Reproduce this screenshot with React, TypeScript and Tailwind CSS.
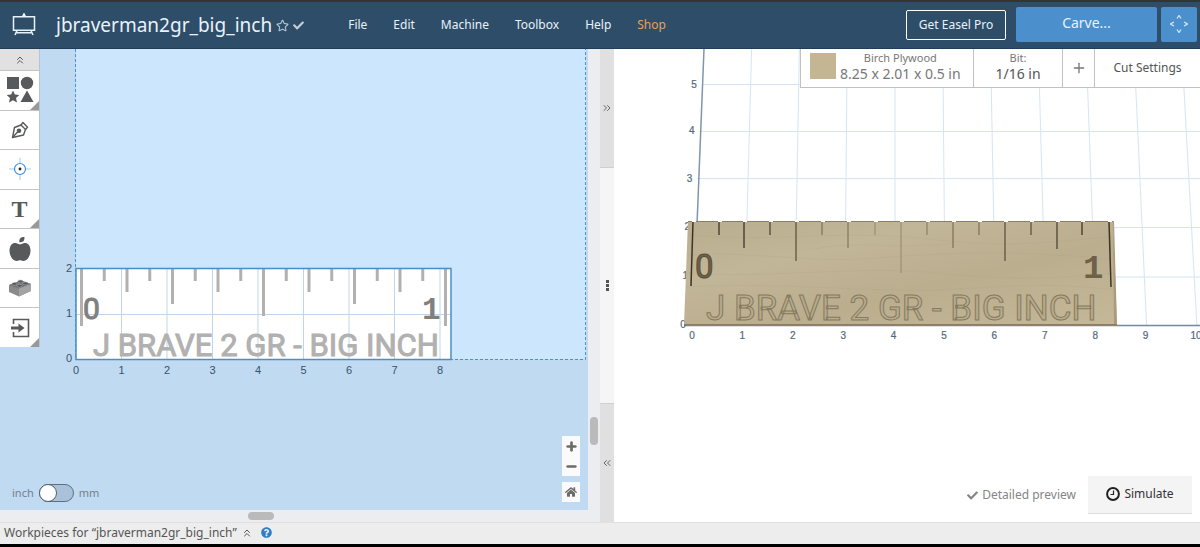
import { ReactNode, useState } from "react";
import { FaAppleAlt, FaCheck, FaHome, FaQuestionCircle, FaRegStar } from "react-icons/fa";
import {
  ChevronsLeft,
  ChevronsRight,
  ChevronsUp,
  Minus,
  Plus,
} from "lucide-react";

const PROJECT = "jbraverman2gr_big_inch";
const ENGRAVING = "J BRAVE 2 GR - BIG INCH";

const menu = ["File", "Edit", "Machine", "Toolbox", "Help"];

// depth of each ruler mark, in pixels of the 2D canvas
const marks = [57, 12, 23, 12, 35, 12, 23, 12, 47, 12, 23, 12, 35, 12, 23, 12, 57];

// x and lower end of each mark on the 3D board
const carvedMarks = [
  [79, 237, "#3d3524"],
  [105, 186, "#4f4632"],
  [130, 199, "#4f4632"],
  [156, 186, "#5d543e"],
  [182, 212, "#6b6149"],
  [208, 186, "#8a7e62"],
  [234, 199, "#8f8366"],
  [261, 186, "#a3967a"],
  [287, 224, "#a3967a"],
  [313, 186, "#968a6e"],
  [339, 199, "#8a7e62"],
  [365, 186, "#8a7e62"],
  [391, 212, "#6b6149"],
  [417, 186, "#6b6149"],
  [443, 200, "#5d543e"],
  [468, 186, "#4f4632"],
  [495, 238, "#3d3524"],
] as const;

const Logo = () => (
  <svg width="24" height="24" viewBox="0 0 24 24" fill="none" stroke="#e6f2fc" strokeWidth="1.500">
    <path d="M1.500 3.800h21v13.500h-21z" />
    <path d="M10.500 3.800L12 .8l1.500 3" fill="#e6f2fc" />
    <path d="M5 17.500L3 22M19 17.500l2 4.500M4.500 19.800h15" />
  </svg>
);

const ShapesIcon = () => (
  <svg width="28" height="28" viewBox="0 0 28 28" fill="#58595b">
    <path d="M1 1h12v12H1z" />
    <circle cx="21" cy="7" r="6.200" />
    <path d="M7 14.500l1.900 4.100 4.400.5-3.300 3 1 4.400L7 24.300l-4 2.200 1-4.400-3.300-3 4.400-.5z" />
    <path d="M21 14.500l6.500 11.500h-13z" />
  </svg>
);

const PenIcon = () => (
  <svg width="18" height="18" viewBox="0 0 18 18" fill="none" stroke="#58595b" strokeWidth="1.400" strokeLinejoin="round">
    <path d="M1.500 16.500L3.500 6.500 10 4l4.500 4.500L12.500 14z" />
    <path d="M10 4l2-2.500 4.500 4.700-2 2.300M1.500 16.500L7.500 10" />
    <circle cx="8" cy="9.800" r="1.600" fill="#58595b" />
  </svg>
);

const TargetIcon = () => (
  <svg width="22" height="22" viewBox="0 0 22 22" fill="none">
    <path d="M11 0v5M11 17v5M0 11h5M17 11h5" stroke="#9ccbf2" />
    <circle cx="11" cy="11" r="5.500" stroke="#3d8fdc" strokeWidth="1.200" />
    <circle cx="11" cy="11" r="1.400" fill="#222" />
  </svg>
);

const BrickIcon = () => (
  <svg width="24" height="18" viewBox="0 0 24 18">
    <path d="M1 6l12-4.500L23 5v7l-12 5.500L1 13z" fill="#8a8a8a" />
    <path d="M1 6l12-4.500L23 5l-12 4.500z" fill="#6d6e70" />
    <path d="M11 9.500L23 5v7l-12 5.500z" fill="#a3a3a3" />
    <g fill="#58595b" stroke="#bbb" strokeWidth=".5">
      <ellipse cx="6.500" cy="5" rx="2.800" ry="1.500" />
      <ellipse cx="12.500" cy="2.500" rx="2.800" ry="1.500" />
      <ellipse cx="11.500" cy="6.800" rx="2.800" ry="1.500" />
      <ellipse cx="17.500" cy="4.500" rx="2.800" ry="1.500" />
    </g>
  </svg>
);

const ImportIcon = () => (
  <svg width="20" height="20" viewBox="0 0 20 20" fill="none" stroke="#58595b">
    <path d="M3.500 6V1.500h15v17h-15V14" strokeWidth="1.600" />
    <path d="M1 10h8" strokeWidth="3" />
    <path d="M8.500 5.500l6 4.500-6 4.500z" fill="#58595b" stroke="none" />
  </svg>
);

const ClockIcon = () => (
  <svg width="14" height="14" viewBox="0 0 14 14" fill="none" stroke="#222">
    <circle cx="7" cy="7" r="5.900" strokeWidth="2" />
    <path d="M7.500 3.500v4H4.500" strokeWidth="1.200" />
  </svg>
);

const MoveIcon = () => (
  <svg width="18" height="18" viewBox="0 0 18 18" fill="none" stroke="#d5e9fa" strokeWidth="1.200">
    <path d="M7 3.500l2-3 2 3M7 14.500l2 3 2-3M4 7L.500 9 4 11M14 7l3.500 2-3.500 2" />
  </svg>
);

const tools: { label: string; icon: ReactNode; more: boolean }[] = [
  { label: "Shapes", icon: <ShapesIcon />, more: true },
  { label: "Pen", icon: <PenIcon />, more: false },
  { label: "Drill", icon: <TargetIcon />, more: false },
  { label: "Text", icon: <span className="font-['Liberation_Serif',serif] text-2xl font-bold">T</span>, more: true },
  { label: "Icons", icon: <FaAppleAlt size={24} />, more: false },
  { label: "Apps", icon: <BrickIcon />, more: false },
  { label: "Import", icon: <ImportIcon />, more: true },
];

const Header = () => (
  <header className="flex h-[49px] shrink-0 items-center border-t-2 border-b border-t-[#35352f] border-b-[#1f3d59] bg-[#2e4d68] pr-[3px] pl-3 text-[#e9f2fa]">
    <Logo />
    <h1 className="ml-5 text-[19px]">{PROJECT}</h1>
    <button aria-label="Favorite" className="ml-1">
      <FaRegStar size={13} className="text-[#b5c6d6]" />
    </button>
    <FaCheck size={11} className="ml-1 text-[#c3ced9]" />
    <nav className="ml-11 flex gap-[26px] text-[12px]">
      {menu.map((item) => (
        <button key={item}>{item}</button>
      ))}
      <a href="#shop" className="text-[#e0a458]">
        Shop
      </a>
    </nav>
    <div className="ml-auto flex items-center gap-1">
      <button className="mr-1.5 h-[30px] w-[100px] rounded-xs border border-white text-[12px]">
        Get Easel Pro
      </button>
      <button className="mb-0.5 h-[35px] w-[141px] rounded-xs bg-[#4c8fcd] pb-1 text-[14px]">
        Carve...
      </button>
      <button aria-label="Jog machine" className="mb-0.5 flex h-[35px] w-9 items-center justify-center rounded-xs bg-[#4c8fcd]">
        <MoveIcon />
      </button>
    </div>
  </header>
);

const Toolbar = () => (
  <div className="flex h-[298px] w-10 shrink-0 flex-col border-r border-[#b8c4ce] bg-white text-[#58595b]">
    <button aria-label="Collapse toolbar" className="flex h-[21px] items-center justify-center bg-[#e1e1e1]">
      <ChevronsUp size={12} />
    </button>
    {tools.map((tool) => (
      <button
        key={tool.label}
        aria-label={tool.label}
        className="relative flex flex-1 items-center justify-center border-t border-[#c4c4c4]"
      >
        {tool.icon}
        {tool.more && (
          <svg width="9" height="9" className="absolute right-0 bottom-0">
            <path d="M9 0v9H0z" fill="#999" />
          </svg>
        )}
      </button>
    ))}
  </div>
);

const DesignCanvas = () => (
  <svg className="h-full min-w-0 flex-1">
    {/* bed */}
    <rect x="36" y="-2" width="510" height="312" fill="#cce6fe" />
    {/* workpiece */}
    <rect x="36" y="219" width="375" height="91" fill="#fff" />
    <g stroke="#bfd6ea">
      {[1, 2, 3, 4, 5, 6, 7, 8].map((n) => (
        <path key={n} d={`M${36 + n * 45.5} 219V310`} />
      ))}
      <path d="M36 265.500H411" />
    </g>
    <g stroke="#b1b1b1" strokeWidth="3">
      {marks.map((depth, i) => (
        <path key={i} d={`M${41.5 + i * 22.75} 220v${depth}`} />
      ))}
    </g>
    <g fontFamily="Roboto, sans-serif">
      <text x="53" y="307" fontSize="31" fill="#b1b1b1" stroke="#b1b1b1">
        {ENGRAVING}
      </text>
      <text x="43" y="270" fontSize="30" fill="#808080" stroke="#808080">
        0
      </text>
    </g>
    <text x="382" y="270" fontSize="31" fontWeight="bold" fontFamily="'Liberation Mono', monospace" fill="#808080">
      1
    </text>
    <rect x="36" y="219.500" width="375" height="91" fill="none" stroke="#4a8dc6" strokeWidth="1.500" />
    <path d="M35.500 0V310.500H545.500V0" fill="none" stroke="#4a92cc" strokeDasharray="3 2" />
    <g fontFamily="'Liberation Sans', sans-serif" fontSize="11" fill="#38526b">
      {[0, 1, 2, 3, 4, 5, 6, 7, 8].map((n) => (
        <text key={n} x={36 + n * 45.5} y="325" textAnchor="middle">
          {n}
        </text>
      ))}
      {[0, 1, 2].map((n) => (
        <text key={n} x="32" y={313 - n * 45} textAnchor="end">
          {n}
        </text>
      ))}
    </g>
  </svg>
);

const gridX = (n: number, y: number) => 281 + (n - 4) * (47.8 + (y / 275) * 2.5);

const Preview = () => (
  <svg className="h-full w-full">
    <defs>
      <linearGradient id="wood" x1="0" y1="0" x2="1" y2="1">
        <stop offset="0" stopColor="#b9ad90" />
        <stop offset="0.3" stopColor="#c2b698" />
        <stop offset="0.6" stopColor="#bbae8f" />
        <stop offset="1" stopColor="#c4b899" />
      </linearGradient>
    </defs>
    <g stroke="#d5e5f3">
      {[1, 2, 3, 4, 5, 6, 7, 8, 9, 10].map((n) => (
        <path key={n} d={`M${gridX(n, 0)} 0L${gridX(n, 276)} 276`} />
      ))}
      <path d="M88 35.500H800M85 82.500H800M83 129.500H800M81 178.500H800M79 228H800" />
    </g>
    <path d="M90 0L79 276" stroke="#7f97ad" strokeWidth="1.500" />
    <path d="M70 276.500H800" stroke="#7088a0" strokeWidth="1.500" />
    <g fontFamily="'Liberation Sans', sans-serif" fontSize="10" fill="#52687d" stroke="#52687d" strokeWidth=".2" textAnchor="middle">
      {[0, 1, 2, 3, 4, 5, 6, 7, 8, 9, 10].map((n) => (
        <text key={n} x={78 + n * 50.4} y="290">
          {n}
        </text>
      ))}
      {[279, 230, 181, 133, 85, 39].map((y, n) => (
        <text key={n} x={69 + n * 2.2} y={y}>
          {n}
        </text>
      ))}
    </g>
    {/* board */}
    <path d="M74 172H499L503 276H70z" fill="url(#wood)" />
    <path d="M499 172l1 0 3 104h-3z" fill="#a99c7c" />
    <g fill="none" stroke="#a99d7e" strokeOpacity=".18">
      <path d="M75 186c90 8 150-6 240 4s120 2 184-2" />
      <path d="M74 206c60-5 120 9 190 3s150-8 236 2" />
      <path d="M73 224c80 6 170-8 250 0s110 6 178 0" />
      <path d="M72 238c100-6 180 7 270 2s100-5 160 1" />
      <path d="M200 200c40-9 90 1 140-6" />
    </g>
    <path d="M74 172.500H499M70 275.500H503" stroke="#8a7f63" fill="none" />
    <g strokeWidth="1.500">
      {carvedMarks.map(([x, end, color], i) => (
        <path key={i} d={`M${x} 172L${i === 0 ? x - 2 : i === 16 ? x + 2 : x} ${end}`} stroke={color} />
      ))}
    </g>
    <g stroke="#fff" strokeWidth="2">
      {carvedMarks.map(([x], i) => (
        <path key={i} d={`M${x - 1} 172h4`} />
      ))}
    </g>
    <g fontFamily="Roboto, sans-serif">
      <text x="92" y="271" fontSize="35" fill="#b8ab8b" stroke="#857a5f">
        {ENGRAVING}
      </text>
      <text x="81" y="229" fontSize="33" fill="#6d6148" stroke="#5a4f38">
        0
      </text>
    </g>
    <text x="469" y="229" fontSize="34" fontWeight="bold" fontFamily="'Liberation Mono', monospace" fill="#6d6148">
      1
    </text>
  </svg>
);

const UnitToggle = () => {
  const [metric, setMetric] = useState<boolean>(false);

  return (
    <label className="absolute bottom-2 left-3 flex items-center gap-[5px] text-[11px] text-[#74808c]">
      inch
      <input
        type="checkbox"
        checked={metric}
        onChange={(e) => setMetric(e.target.checked)}
        className="peer sr-only"
      />
      <span className="flex h-[18px] w-[35px] rounded-full border border-[#5b7084] bg-[#a9c2da] peer-checked:justify-end">
        <span className="-m-px size-[18px] rounded-full border border-[#4f5f6e] bg-white" />
      </span>
      mm
    </label>
  );
};

const ZoomControls = () => (
  <div className="absolute right-2 bottom-2 flex w-[18px] flex-col text-[#6b6b6b]">
    <button aria-label="Zoom in" className="flex h-5 items-center justify-center bg-[#fafafa]">
      <Plus size={13} strokeWidth={5} />
    </button>
    <button aria-label="Zoom out" className="flex h-5 items-center justify-center bg-[#fafafa]">
      <Minus size={13} strokeWidth={5} />
    </button>
    <button aria-label="Reset view" className="mt-1.5 flex h-5 items-center justify-center bg-[#fafafa]">
      <FaHome size={12} />
    </button>
  </div>
);

const Splitter = () => (
  <div className="flex w-3.5 shrink-0 flex-col bg-[#e0e0e0] text-[#666]">
    <button aria-label="Expand design" className="flex flex-1 items-center justify-center">
      <ChevronsRight size={12} />
    </button>
    <div className="flex flex-2 flex-col items-center justify-center gap-px border-y border-[#cfcfcf] bg-[#f5f5f5]">
      <span className="size-[3px] bg-[#555]" />
      <span className="size-[3px] bg-[#555]" />
      <span className="size-[3px] bg-[#555]" />
    </div>
    <button aria-label="Expand preview" className="flex flex-1 items-center justify-center">
      <ChevronsLeft size={12} />
    </button>
  </div>
);

const MaterialBar = () => (
  <div className="absolute top-0 right-0 flex h-[39px] w-[400px] border-b border-l border-[#c2c2c2] bg-white text-[#777]">
    <button className="flex w-[172px] items-center gap-1 pb-1 pl-[9px]">
      <span className="size-[26px] bg-[#c4b692]" />
      <span className="flex flex-col items-center whitespace-nowrap">
        <span className="text-[11px] leading-4">Birch Plywood</span>
        <span className="text-[14px] leading-4">8.25 x 2.01 x 0.5 in</span>
      </span>
    </button>
    <button className="flex w-[89px] flex-col items-center justify-center border-l border-[#c2c2c2] pb-1">
      <span className="text-[11px] leading-4">Bit:</span>
      <span className="text-[14px] leading-4 text-[#555]">1/16 in</span>
    </button>
    <button aria-label="Add bit" className="flex w-8 items-center justify-center border-l border-[#c2c2c2]">
      <Plus size={16} strokeWidth={2} />
    </button>
    <button className="flex-1 border-l border-[#c2c2c2] text-[12px] text-[#555]">Cut Settings</button>
  </div>
);

const App = () => {
  return (
    <div className="flex h-screen flex-col overflow-hidden bg-[#ededed] font-['Noto_Sans',sans-serif]">
      <Header />
      <main className="flex min-h-0 flex-1">
        <section className="flex w-1/2 flex-col bg-[#ebedf0]">
          <div className="flex min-h-0 flex-1">
            <div className="relative flex min-w-0 flex-1 bg-[#c0daf1]">
              <Toolbar />
              <DesignCanvas />
              <UnitToggle />
              <ZoomControls />
            </div>
            <div className="flex w-3 flex-col items-center justify-end pb-[65px]">
              <span className="h-7 w-2 rounded-full bg-[#bababa]" />
            </div>
          </div>
          <div className="flex h-3 items-center justify-end pr-[326px]">
            <span className="h-2 w-[26px] rounded-full bg-[#bababa]" />
          </div>
        </section>
        <Splitter />
        <section className="relative min-w-0 flex-1 bg-white">
          <Preview />
          <MaterialBar />
          <div className="absolute right-2 bottom-2 flex items-center gap-3 text-[12px]">
            <button className="flex items-center gap-1 text-[#858585]">
              <FaCheck size={11} />
              Detailed preview
            </button>
            <button className="flex h-[38px] w-[104px] items-center justify-center gap-1 border-b border-[#ddd] bg-[#f4f4f4] pb-0.5 text-[#333]">
              <ClockIcon />
              Simulate
            </button>
          </div>
        </section>
      </main>
      <footer className="flex h-[25px] shrink-0 items-center gap-1 border-t border-b-3 border-t-[#e0e0e0] border-b-black pb-0.5 pl-1 text-[12px] text-[#555]">
        Workpieces for “{PROJECT}”
        <ChevronsUp size={12} />
        <FaQuestionCircle size={11} className="ml-1 text-[#2f7fc6]" />
      </footer>
    </div>
  );
};

export default App;
